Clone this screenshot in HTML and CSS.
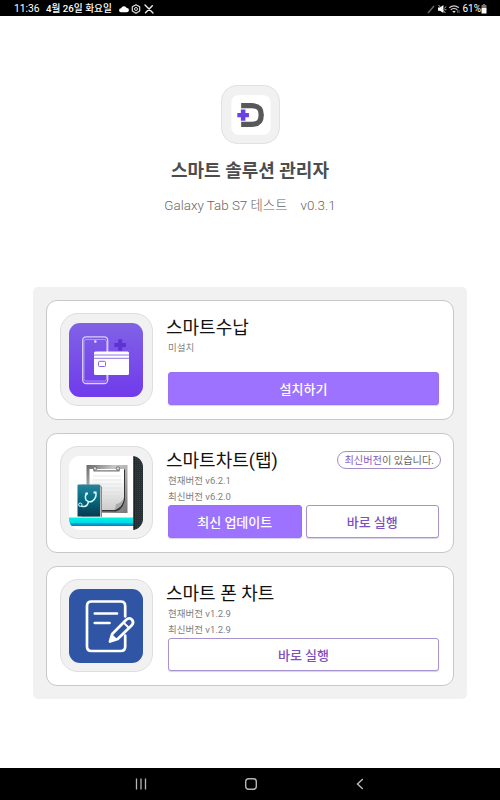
FILE: index.html
```html
<!DOCTYPE html>
<html lang="ko">
<head>
    <meta charset="UTF-8">
    <meta name="viewport" content="width=device-width, initial-scale=1.0">
    <title>스마트 솔루션 관리자</title>
    <link rel="stylesheet" href="styles.css">
</head>
<body>

    <div class="status-bar">
        <span class="time">11:36</span>
        <span class="date">4월 26일 화요일</span>
        <svg class="status-left" width="38" height="12" viewBox="0 0 38 12">
            <path d="M3 9.2a2 2 0 0 1 .1-4A3.1 3.1 0 0 1 8.7 5a2.1 2.1 0 0 1 .3 4.2z" fill="#fff"/>
            <path d="M18 1.7l3.7 2.1v4.3L18 10.3l-3.7-2.2V3.8z" fill="none" stroke="#ddd" stroke-width="1.2" stroke-linejoin="round"/>
            <circle cx="18" cy="6" r="1.5" fill="none" stroke="#ddd"/>
            <path d="M27 2l8 8M27.5 9.7l6.8-7" fill="none" stroke="#eee" stroke-width="1.4" stroke-linecap="round"/>
        </svg>
        <svg class="status-right" width="34" height="12" viewBox="0 0 34 12">
            <path d="M2 10l6-7" stroke="#666" stroke-width="1.5"/>
            <path d="M12 4.4h2L17.4 2v8L14 7.7h-2z" fill="#fff"/>
            <path d="M12.5 2l7 8M18.3 5.3l2-1.8M18.5 6.7h1.8" stroke="#ddd" stroke-width=".8"/>
            <path d="M23.2 4.8q4.8-3.8 9.6 0M24.8 6.7q3.2-2.4 6.4 0" fill="none" stroke="#ccc" stroke-width="1.2"/>
            <path d="M26.3 8.2q1.7-1 3.4 0L28 10z" fill="#ddd"/>
            <path d="M31.6 7v3M33 7v3" stroke="#888" stroke-width=".7"/>
        </svg>
        <span class="percent">61%</span>
        <svg width="6" height="10" viewBox="0 0 6 10">
            <path d="M2 0h2v1h1.5v3h-5V1H2z" fill="#777"/>
            <path d="M.5 4h5v5.5h-5z" fill="#fff"/>
        </svg>
    </div>

    <header class="app-header">
        <div class="app-logo">
            <svg width="57" height="57" viewBox="0 0 58 58">
                <rect x="9.5" y="9.5" width="40" height="40" rx="7" fill="#fff"/>
                <path d="M19.5 20h10.5c7.5 0 9.9 3.2 9.9 9.500s-2.4 9.500-9.9 9.500H19.5" fill="none" stroke="#58585a" stroke-width="5.4"/>
                <path d="M19.2 24h4.6v3.400h3.6v4.500h-3.6v3.400h-4.6v-3.400h-3.6v-4.500h3.6z" fill="#6941e6"/>
            </svg>
        </div>
        <h1>스마트 솔루션 관리자</h1>
        <p class="device"><span>Galaxy Tab S7 테스트</span><span>v0.3.1</span></p>
    </header>

    <main class="app-list">
        <section class="card">
            <div class="app-icon">
                <svg width="74" height="74" viewBox="0 0 74 74">
                    <defs>
                        <linearGradient id="payBg" x1="0" y1="0" x2="0" y2="1">
                            <stop offset="0" stop-color="#8062e6"/>
                            <stop offset="1" stop-color="#703beb"/>
                        </linearGradient>
                    </defs>
                    <rect width="74" height="74" rx="11" fill="url(#payBg)"/>
                    <rect x="13.7" y="13.8" width="25" height="46.7" rx="3.5" fill="none" stroke="#d9cffa" stroke-width="1.3"/>
                    <path d="M15 18.5q0-2 2-2h18.5q2 0 2 2V56q0 2-2 2H17q-2 0-2-2z" fill="none" stroke="#c4b4f6" stroke-width=".7"/>
                    <circle cx="26.3" cy="18.5" r="1.3" fill="#e8e0ff"/>
                    <path d="M49.2 16.3h4V20H57v4h-3.800v3.800h-4V24h-3.800v-4h3.800z" fill="#5e32d3"/>
                    <rect x="25" y="28.5" width="35" height="23.5" rx="1.5" fill="#fff"/>
                    <path d="M25 32h35M25 35.3h35" stroke="#9274eb" stroke-width="1"/>
                    <rect x="29.5" y="38.3" width="7" height="5.2" rx="1" fill="#fff" stroke="#8564df" stroke-width="1"/>
                </svg>
            </div>
            <div class="info">
                <h2>스마트수납</h2>
                <p class="version">미설치</p>
                <div class="actions">
                    <button class="btn btn-fill">설치하기</button>
                </div>
            </div>
        </section>

        <section class="card">
            <div class="app-icon">
                <svg width="74" height="74" viewBox="0 0 74 74">
                    <defs>
                        <clipPath id="chartClip"><rect width="74" height="74" rx="11"/></clipPath>
                        <linearGradient id="board" x1="0" y1="0" x2="1" y2="1">
                            <stop offset="0" stop-color="#666"/>
                            <stop offset=".35" stop-color="#c6c6c6"/>
                            <stop offset="1" stop-color="#777"/>
                        </linearGradient>
                        <linearGradient id="paper" x1="0" y1="0" x2="0" y2="1">
                            <stop offset=".2" stop-color="#fff"/>
                            <stop offset="1" stop-color="#ccc"/>
                        </linearGradient>
                        <linearGradient id="book" x1="0" y1="0" x2="0" y2="1">
                            <stop offset="0" stop-color="#28849a"/>
                            <stop offset=".4" stop-color="#087087"/>
                            <stop offset="1" stop-color="#073a50"/>
                        </linearGradient>
                        <linearGradient id="shelf" x1="0" y1="0" x2="0" y2="1">
                            <stop offset="0" stop-color="#00f5df"/>
                            <stop offset=".65" stop-color="#00d7ec"/>
                            <stop offset=".7" stop-color="#00a9d8"/>
                            <stop offset="1" stop-color="#0086bf"/>
                        </linearGradient>
                        <pattern id="mesh" width="2" height="2" patternUnits="userSpaceOnUse">
                            <rect width="2" height="2" fill="#263035"/>
                            <rect width="1" height="1" fill="#343e43"/>
                        </pattern>
                    </defs>
                    <g clip-path="url(#chartClip)">
                        <rect width="74" height="74" fill="#fff"/>
                        <rect x="17.5" y="9" width="41" height="48" fill="url(#board)"/>
                        <path d="M21.5 13.5h34.5v30q-2 10-9 12H21.500z" fill="#333"/>
                        <path d="M20.5 13h34.5v28.500q-1 10-10 12.500H20.500z" fill="url(#paper)"/>
                        <path d="M24 20h28M24 24h28M24 28h28M24 32h28M24 36h28M24 40h28M24 44h25" stroke="#dadada" stroke-width=".6"/>
                        <path d="M55 41.500q-1 10-10 12.500 2-3 2-6 5 0 8-6.500z" fill="#aaa"/>
                        <path d="M25 12v2.800h25V12" fill="none" stroke="#777" stroke-width="1.200"/>
                        <circle cx="26" cy="12.500" r="1.700" fill="#ddd" stroke="#555" stroke-width=".7"/>
                        <circle cx="49" cy="12.500" r="1.700" fill="#ddd" stroke="#555" stroke-width=".7"/>
                        <path d="M12 28.500l20.500 1v31l-20 .5z" fill="#bbb"/>
                        <path d="M30.500 30l2 1v30" fill="none" stroke="#888"/>
                        <path d="M8.500 29.500q0-1 1-1H30q1 0 1 1v31H8.500z" fill="url(#book)"/>
                        <path d="M17.500 37.500q-2 3-.5 6.500 3 3 6.500 1 4-3 3.500-8M19.500 45.500q-1 5-4.500 5-3 .5-4-2" fill="none" stroke="#d3f8fb" stroke-width="1.500"/>
                        <path d="M16.500 37.500H19M24.500 36.500h3" stroke="#e7feff" stroke-width="2"/>
                        <circle cx="11.300" cy="48.700" r="1.700" fill="#168" stroke="#cff" stroke-width="1"/>
                        <rect y="61.500" width="65" height="8.500" fill="url(#shelf)"/>
                        <rect x="64.500" width="9.500" height="74" fill="url(#mesh)"/>
                        <path d="M65 0v74" stroke="#101719"/>
                    </g>
                </svg>
            </div>
            <div class="info">
                <div class="title-row">
                    <h2>스마트차트(탭)</h2>
                    <span class="badge"><em>최신버전</em>이 있습니다.</span>
                </div>
                <p class="version">현재버전 v6.2.1</p>
                <p class="version">최신버전 v6.2.0</p>
                <div class="actions">
                    <button class="btn btn-fill">최신 업데이트</button>
                    <button class="btn btn-line">바로 실행</button>
                </div>
            </div>
        </section>

        <section class="card">
            <div class="app-icon">
                <svg width="74" height="74" viewBox="0 0 74 74">
                    <rect width="74" height="74" rx="11" fill="#2f55a4"/>
                    <g fill="none" stroke="#fff" stroke-width="2.7" stroke-linecap="round" stroke-linejoin="round">
                        <path d="M56.200 27.500V17q0-4.500-4.500-4.500H22.500Q18 12.500 18 17v40.500q0 4.500 4.500 4.500h29.200q4.500 0 4.500-4.500V46.500"/>
                        <path d="M25.800 24.500H48M25.800 34H40.500"/>
                        <path d="M41 52.500l2.200-7.500L57 31q3-2.800 5.800-.5 2.600 2.800 0 5.800L48.700 50z"/>
                        <path d="M54.500 33.500l5.500 5.500" stroke-width="1.800"/>
                    </g>
                    <path d="M41 52.500l2.200-7 5 4.500z" fill="#fff"/>
                </svg>
            </div>
            <div class="info">
                <h2>스마트 폰 차트</h2>
                <p class="version">현재버전 v1.2.9</p>
                <p class="version">최신버전 v1.2.9</p>
                <div class="actions">
                    <button class="btn btn-line">바로 실행</button>
                </div>
            </div>
        </section>
    </main>

    <nav class="nav-bar">
        <svg width="12" height="14" viewBox="0 0 12 14"><path d="M1.500 1.500v11M6 1.500v11M10.500 1.500v11" stroke="#b5b5b5" stroke-width="1.300"/></svg>
        <svg width="14" height="14" viewBox="0 0 14 14"><rect x="1.700" y="1.700" width="10.600" height="10.600" rx="3" fill="none" stroke="#b5b5b5" stroke-width="1.400"/></svg>
        <svg width="12" height="14" viewBox="0 0 12 14"><path d="M8.800 2L3.500 7l5.300 5" fill="none" stroke="#b5b5b5" stroke-width="1.500"/></svg>
    </nav>

</body>
</html>
```

FILE: styles.css
```css
* {
    box-sizing: border-box;
}

body {
    display: flex;
    flex-direction: column;
    height: 800px;
    margin: 0;
    background: #fff;
    font-family: Roboto, "Noto Sans CJK KR", sans-serif;
    white-space: nowrap;
    overflow: hidden;
}

svg {
    display: block;
    flex-shrink: 0;
}

h1, h2, p {
    margin: 0;
}

.status-bar {
    display: flex;
    align-items: center;
    height: 16px;
    padding: 1px 13px 0 14px;
    background: #000;
    color: #fff;
    font-size: 10px;
    line-height: 15px;
}

.time {
    width: 32px;
    font-size: 10.3px;
}

.date {
    width: 72px;
    font-size: 9.7px;
    font-weight: 500;
}

.status-right {
    margin-left: auto;
    margin-right: 2px;
}

.app-header {
    display: flex;
    flex-direction: column;
    align-items: center;
    height: 271px;
    padding-top: 69px;
}

.app-logo {
    width: 59px;
    height: 59px;
    border: 1px solid #e2e2e2;
    border-radius: 16px;
    background: #f1f1f1;
}

h1 {
    margin-top: 13px;
    color: #4d4d4d;
    font-size: 18px;
    font-weight: 700;
    line-height: 28px;
}

.device {
    display: flex;
    gap: 13px;
    margin-top: 11px;
    color: #666;
    font-size: 13.4px;
    font-weight: 300;
    line-height: 20px;
}

.app-list {
    display: flex;
    flex-direction: column;
    gap: 13px;
    width: 434px;
    height: 412px;
    margin: 0 auto;
    padding: 13px;
    border-radius: 5px;
    background: #f1f1f1;
}

.card {
    display: flex;
    height: 120px;
    padding: 12px 14px 14px 13px;
    border: 1px solid #c8c8c8;
    border-radius: 11px;
    background: #fff;
}

.app-icon {
    width: 93px;
    height: 93px;
    padding: 9px 8px;
    flex-shrink: 0;
    border: 1px solid #dedede;
    border-radius: 18px;
    background: #f1f1f1;
}

.info {
    display: flex;
    flex-direction: column;
    flex: 1;
    margin-left: 15px;
}

.title-row {
    display: flex;
    justify-content: space-between;
    align-items: center;
    height: 27px;
}

h2 {
    height: 27px;
    margin-left: -2px;
    color: #111;
    font-size: 18px;
    font-weight: 400;
    line-height: 29px;
}

.version {
    color: #808080;
    font-size: 9.5px;
    line-height: 16px;
}

.badge {
    height: 18px;
    margin-right: -2px;
    padding: 0 6px;
    border: 1px solid #a48bc9;
    border-radius: 9px;
    color: #666;
    font-size: 10.2px;
    line-height: 17px;
}

.badge em {
    color: #8659c2;
    font-style: normal;
}

.actions {
    display: flex;
    gap: 4px;
    margin-top: auto;
}

.btn {
    flex: 1;
    height: 33px;
    padding: 1px 0 0;
    border: 1px solid #a794cf;
    border-radius: 3px;
    font-family: inherit;
    font-size: 13px;
    font-weight: 500;
    line-height: 31px;
    box-shadow: 0 1px 1px rgba(100, 70, 160, 0.25);
}

.btn-fill {
    border-color: #9870f2;
    background: #9d72ff;
    color: #fff;
}

.btn-line {
    background: #fff;
    color: #7d4fc0;
}

.nav-bar {
    display: flex;
    align-items: center;
    justify-content: space-between;
    height: 32px;
    margin-top: auto;
    padding: 0 134px 0 135px;
    background: #000;
}
```
